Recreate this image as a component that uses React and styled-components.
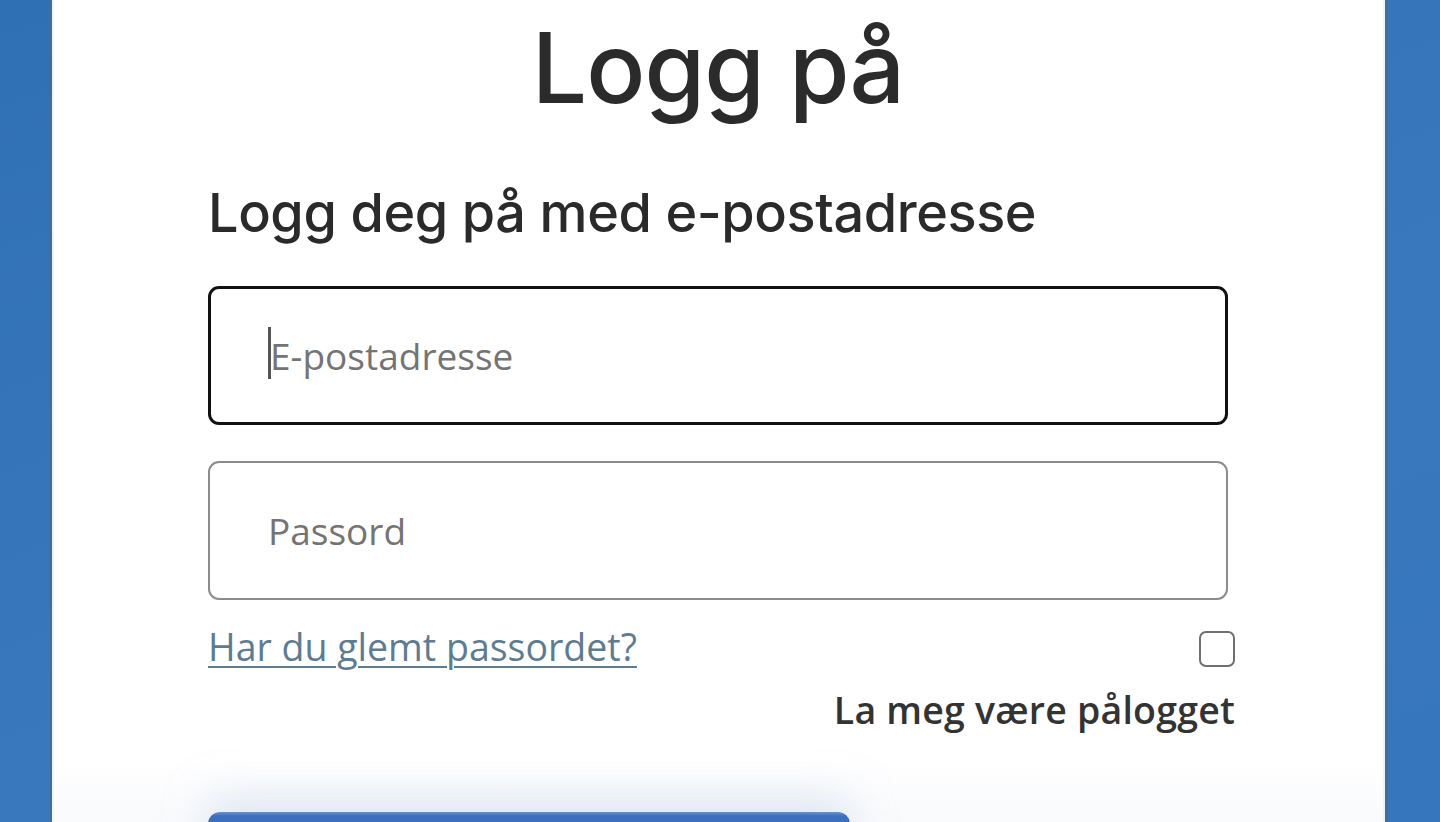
import React from 'react'
import styled, { createGlobalStyle } from 'styled-components'

const Global = createGlobalStyle`
  html, body {
    margin: 0;
    padding: 0;
    height: 100%;
    overflow: hidden;
  }
  body {
    font-family: "Open Sans", "Noto Sans", sans-serif;
    background: linear-gradient(160deg, #2f6fb4 0%, #3574b9 30%, #3a78bd 60%, #3676bc 100%);
  }
`

const Page = styled.div`
  height: 100vh;
  padding: 0 55px 0 52px;
  box-sizing: border-box;
`

const Card = styled.div`
  background: linear-gradient(180deg, #ffffff 0%, #ffffff 86%, #f3f5f9 100%);
  min-height: 100%;
  box-sizing: border-box;
  padding: 12px 157px 0 156px;
  box-shadow: -2px 0 0 #4a6c8e, 3px 0 0 #4a6c8e, inset 2px 0 0 #e6f6fb, inset -2px 0 0 #e6f6fb;
`

const Title = styled.h1`
  margin: 0;
  font-family: Inter, "Open Sans", sans-serif;
  font-size: 98px;
  line-height: 1.15;
  font-weight: 500;
  letter-spacing: -1px;
  color: #2b2b2b;
  text-align: center;
`

const Subtitle = styled.h2`
  margin: 54px 0 40px;
  font-family: Inter, "Open Sans", sans-serif;
  font-size: 54px;
  line-height: 1.25;
  font-weight: 500;
  letter-spacing: -0.4px;
  color: #2a2a2a;
`

const Field = styled.div`
  position: relative;
  margin-bottom: ${p => p.$gap || 0}px;
`

const Input = styled.input`
  display: block;
  width: 100%;
  height: 139px;
  box-sizing: border-box;
  border: ${p => (p.$focused ? '3px solid #111' : '2px solid #8c8c8c')};
  border-radius: 11px;
  padding: 0 0 0 ${p => (p.$focused ? 59 : 58)}px;
  font-family: inherit;
  font-size: 37px;
  color: #222;
  background: #fff;
  outline: none;
  &::placeholder {
    color: #747474;
  }
`

const Caret = styled.span`
  position: absolute;
  left: 60px;
  top: 41px;
  width: 3px;
  height: 52px;
  background: #555;
`

const Options = styled.div`
  display: flex;
  justify-content: space-between;
  align-items: flex-start;
  margin: 24px -7px 0 0;
`

const Link = styled.a`
  font-size: 37.5px;
  line-height: 1.2;
  color: #5d7b91;
  text-decoration: underline;
  text-decoration-thickness: 2px;
  text-underline-offset: 5px;
`

const Remember = styled.label`
  display: flex;
  flex-direction: column;
  align-items: flex-end;
  gap: 20px;
  margin-top: 7px;
`

const Box = styled.span`
  width: 36px;
  height: 36px;
  box-sizing: border-box;
  border: 2.5px solid #707070;
  border-radius: 7px;
  background: #fff;
`

const RememberText = styled.span`
  font-size: 37.5px;
  line-height: 1.2;
  font-weight: 600;
  color: #333;
  letter-spacing: 0.2px;
`

const Button = styled.button`
  display: block;
  margin-top: 80px;
  width: 642px;
  height: 70px;
  border: none;
  border-radius: 12px;
  background: linear-gradient(180deg, #6d93c4 0px, #3c6fbd 4px, #3a6dbe 100%);
  box-shadow: 0 -16px 40px rgba(200, 215, 235, 0.55);
`

export default function App() {
  return (
    <>
      <Global />
      <Page>
        <Card>
          <Title>Logg på</Title>
          <Subtitle>Logg deg på med e-postadresse</Subtitle>
          <Field $gap={36}>
            <Input $focused placeholder="E-postadresse" readOnly />
            <Caret />
          </Field>
          <Field>
            <Input type="password" placeholder="Passord" readOnly />
          </Field>
          <Options>
            <Link href="#">Har du glemt passordet?</Link>
            <Remember>
              <Box />
              <RememberText>La meg være pålogget</RememberText>
            </Remember>
          </Options>
          <Button type="button" />
        </Card>
      </Page>
    </>
  )
}
